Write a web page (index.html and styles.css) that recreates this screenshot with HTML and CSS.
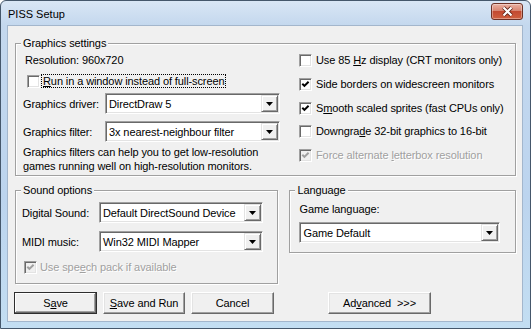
FILE: index.html
```html
<!DOCTYPE html>
<html lang="en">
<head>
    <meta charset="UTF-8">
    <meta name="viewport" content="width=device-width, initial-scale=1.0">
    <title>PISS Setup</title>
    <link rel="stylesheet" href="styles.css">
</head>
<body>
    <div class="window">
        <div class="titlebar">
            <span class="title">PISS Setup</span>
            <span class="close">
                <svg width="13" height="11" viewBox="0 0 13 11">
                    <path d="M2.5 1.5 L10.5 9.5 M10.5 1.5 L2.5 9.5" stroke="#5a2014" stroke-width="3.8" fill="none"/>
                    <path d="M2.5 1.5 L10.5 9.5 M10.5 1.5 L2.5 9.5" stroke="#fff" stroke-width="2.2" fill="none"/>
                </svg>
            </span>
        </div>

        <div class="client">
            <fieldset class="group graphics">
                <legend>Graphics settings</legend>
                <div class="graphics-body">
                    <div class="col-left">
                        <div class="resolution">Resolution: 960x720</div>
                        <div class="check-row run-window">
                            <span class="box"></span>
                            <span class="focus"><u>R</u>un in a window instead of full-screen</span>
                        </div>
                        <div class="field-row driver">
                            <span class="field-label">Graphics driver:</span>
                            <div class="combo combo-graphics">
                                <span class="combo-text">DirectDraw 5</span>
                                <span class="combo-arrow"><svg width="7" height="4" viewBox="0 0 7 4"><polygon points="0,0 7,0 3.5,4" fill="#000"/></svg></span>
                            </div>
                        </div>
                        <div class="field-row filter">
                            <span class="field-label">Graphics filter:</span>
                            <div class="combo combo-graphics">
                                <span class="combo-text">3x nearest-neighbour filter</span>
                                <span class="combo-arrow"><svg width="7" height="4" viewBox="0 0 7 4"><polygon points="0,0 7,0 3.5,4" fill="#000"/></svg></span>
                            </div>
                        </div>
                        <p class="hint">Graphics filters can help you to get low-resolution<br>games running well on high-resolution monitors.</p>
                    </div>

                    <div class="col-right">
                        <div class="check-row">
                            <span class="box"></span>
                            <span>Use 85 <u>H</u>z display (CRT monitors only)</span>
                        </div>
                        <div class="check-row">
                            <span class="box"><svg width="9" height="9" viewBox="0 0 9 9"><polyline points="1.3,3.8 3.4,5.9 7.6,1.7" stroke="#000" stroke-width="2" fill="none"/></svg></span>
                            <span>Side borders on widescreen monitors</span>
                        </div>
                        <div class="check-row">
                            <span class="box"><svg width="9" height="9" viewBox="0 0 9 9"><polyline points="1.3,3.8 3.4,5.9 7.6,1.7" stroke="#000" stroke-width="2" fill="none"/></svg></span>
                            <span>S<u>m</u>ooth scaled sprites (fast CPUs only)</span>
                        </div>
                        <div class="check-row">
                            <span class="box"></span>
                            <span>Downgra<u>d</u>e 32-bit graphics to 16-bit</span>
                        </div>
                        <div class="check-row disabled">
                            <span class="box"><svg width="9" height="9" viewBox="0 0 9 9"><polyline points="1.3,3.8 3.4,5.9 7.6,1.7" stroke="#a0a0a0" stroke-width="2" fill="none"/></svg></span>
                            <span>Force alternate <u>l</u>etterbox resolution</span>
                        </div>
                    </div>
                </div>
            </fieldset>

            <div class="lower">
                <fieldset class="group sound">
                    <legend>Sound options</legend>
                    <div class="sound-body">
                        <div class="field-row digital">
                            <span class="field-label">Digital Sound:</span>
                            <div class="combo combo-sound">
                                <span class="combo-text">Default DirectSound Device</span>
                                <span class="combo-arrow"><svg width="7" height="4" viewBox="0 0 7 4"><polygon points="0,0 7,0 3.5,4" fill="#000"/></svg></span>
                            </div>
                        </div>
                        <div class="field-row midi">
                            <span class="field-label">MIDI music:</span>
                            <div class="combo combo-sound">
                                <span class="combo-text">Win32 MIDI Mapper</span>
                                <span class="combo-arrow"><svg width="7" height="4" viewBox="0 0 7 4"><polygon points="0,0 7,0 3.5,4" fill="#000"/></svg></span>
                            </div>
                        </div>
                        <div class="check-row disabled speech">
                            <span class="box"><svg width="9" height="9" viewBox="0 0 9 9"><polyline points="1.3,3.8 3.4,5.9 7.6,1.7" stroke="#a0a0a0" stroke-width="2" fill="none"/></svg></span>
                            <span>Use spe<u>e</u>ch pack if available</span>
                        </div>
                    </div>
                </fieldset>

                <fieldset class="group language">
                    <legend>Language</legend>
                    <div class="language-body">
                        <div class="lang-label">Game language:</div>
                        <div class="combo combo-lang">
                            <span class="combo-text">Game Default</span>
                            <span class="combo-arrow"><svg width="7" height="4" viewBox="0 0 7 4"><polygon points="0,0 7,0 3.5,4" fill="#000"/></svg></span>
                        </div>
                    </div>
                </fieldset>
            </div>

            <div class="buttons">
                <span class="btn btn-default">S<u>a</u>ve</span>
                <span class="btn"><u>S</u>ave and Run</span>
                <span class="btn">Cancel</span>
                <span class="btn btn-advanced">Ad<u>v</u>anced &nbsp;&gt;&gt;&gt;</span>
            </div>
        </div>
    </div>
</body>
</html>
```

FILE: styles.css
```css
body {
    margin: 0;
    padding: 0;
    background: #ffffff;
    font-family: "Liberation Sans", Arial, sans-serif;
    font-size: 11px;
    letter-spacing: -0.1px;
    color: #000;
}

.window {
    width: 531px;
    height: 329px;
    box-sizing: border-box;
    border: 1px solid #45576b;
    border-radius: 6px 6px 0 0;
    background: linear-gradient(#d9e6f5 0px, #c4d8ee 24px, #bcd4ee 60%, #c3def2 100%);
    display: flex;
    flex-direction: column;
}

.titlebar {
    height: 24px;
    display: flex;
    justify-content: space-between;
    align-items: center;
    padding: 0 7px 0 7px;
}

.title {
    font-size: 11px;
    padding-top: 2px;
    letter-spacing: 0;
}

.close {
    align-self: flex-start;
    margin-top: 2px;
    width: 32px;
    height: 17px;
    box-sizing: border-box;
    border: 1px solid #6e3125;
    border-radius: 3px;
    background: linear-gradient(#eab1a2 0%, #d88571 45%, #c34a31 50%, #d0603f 100%);
    box-shadow: inset 0 0 0 1px rgba(255, 255, 255, 0.35);
    display: flex;
    align-items: center;
    justify-content: center;
}

.client {
    flex: 1;
    margin: 0 7px 6px 6px;
    border: 1px solid #a3b6cc;
    background: #f0f0f0;
    padding: 11px 6px 0 7px;
}

/* group boxes */

.group {
    margin: 0;
    padding: 0;
    min-width: 0;
    border: 1px solid #a0a0a0;
    box-shadow: inset 1px 1px 0 #fff, 1px 1px 0 #fff;
}

.group legend {
    margin-left: 5px;
    padding: 0 2px;
    line-height: 13px;
    background: #f0f0f0;
}

.graphics {
    width: 501px;
    box-sizing: border-box;
}

.graphics-body {
    display: flex;
    padding: 4px 0 2px 7px;
}

.col-left {
    width: 257px;
}

.col-right {
    margin-left: 19px;
    display: flex;
    flex-direction: column;
    gap: 10.75px;
}

.resolution {
    line-height: 13px;
    margin-left: 2px;
}

/* checkboxes */

.check-row {
    display: flex;
    align-items: center;
    height: 13px;
    line-height: 13px;
    white-space: nowrap;
}

.box {
    width: 13px;
    height: 13px;
    box-sizing: border-box;
    padding: 1px;
    border: 1px solid;
    border-color: #a0a0a0 #fff #fff #a0a0a0;
    box-shadow: inset 1px 1px 0 #696969, inset -1px -1px 0 #e3e3e3;
    background: #fff;
    margin-right: 4px;
    flex: none;
    display: flex;
}

.disabled {
    color: #a0a0a0;
    text-shadow: 1px 1px 0 #fff;
}

.disabled .box {
    background: #f0f0f0;
}

.run-window {
    height: 14px;
    margin-top: 7px;
}

.run-window .box {
    margin-left: 4px;
    margin-right: 2px;
}

.focus {
    line-height: 12px;
    padding: 0 1px;
    outline: 1px dotted #000;
}

/* combo boxes */

.field-row {
    display: flex;
    align-items: center;
}

.driver {
    margin-top: 5px;
}

.filter {
    margin-top: 7px;
}

.field-row .field-label {
    width: 82px;
    flex: none;
}

.combo {
    height: 21px;
    box-sizing: border-box;
    padding: 1px;
    border: 1px solid;
    border-color: #a0a0a0 #fff #fff #a0a0a0;
    box-shadow: inset 1px 1px 0 #696969, inset -1px -1px 0 #e3e3e3;
    background: #fff;
    display: flex;
    align-items: center;
}

.combo-text {
    flex: 1;
    padding-left: 2px;
    white-space: nowrap;
    overflow: hidden;
}

.combo-arrow {
    width: 17px;
    height: 17px;
    box-sizing: border-box;
    border: 1px solid;
    border-color: #e3e3e3 #696969 #696969 #e3e3e3;
    box-shadow: inset 1px 1px 0 #fff, inset -1px -1px 0 #a0a0a0;
    background: #f0f0f0;
    display: flex;
    align-items: center;
    justify-content: center;
    flex: none;
}

.combo-graphics {
    width: 175px;
}

.hint {
    margin: 3px 0 0 0;
    line-height: 14px;
}

/* lower row */

.lower {
    display: flex;
    align-items: flex-start;
    margin-top: 8px;
}

.sound {
    width: 264px;
    box-sizing: border-box;
}

.sound-body {
    padding: 5px 0 9px 6px;
}

.sound .field-label {
    width: 77px;
}

.combo-sound {
    width: 164px;
}

.midi {
    margin-top: 8px;
}

.speech {
    margin-top: 9px;
}

.speech .box {
    margin-left: 2px;
    margin-right: 3px;
}

.language {
    width: 227px;
    box-sizing: border-box;
    margin-left: 11px;
}

.language-body {
    padding: 6px 0 9px 9px;
}

.lang-label {
    line-height: 13px;
}

.combo-lang {
    width: 201px;
    margin-top: 6px;
}

/* buttons */

.buttons {
    display: flex;
    margin-top: 8px;
    margin-left: -1px;
}

.btn {
    width: 83px;
    height: 22px;
    box-sizing: border-box;
    border: 1px solid;
    border-color: #fff #696969 #696969 #fff;
    box-shadow: inset -1px -1px 0 #a0a0a0, inset 1px 1px 0 #e3e3e3;
    background: #f0f0f0;
    display: flex;
    align-items: center;
    justify-content: center;
    margin-right: 6px;
    white-space: nowrap;
}

.btn-default {
    border: 1px solid #2e2e2e;
    box-shadow: inset -1px -1px 0 #696969, inset 1px 1px 0 #fff, inset -2px -2px 0 #a0a0a0;
}

.btn:nth-child(2) {
    width: 82px;
}

.btn-advanced {
    width: 103px;
    margin-left: 48px;
}
```
